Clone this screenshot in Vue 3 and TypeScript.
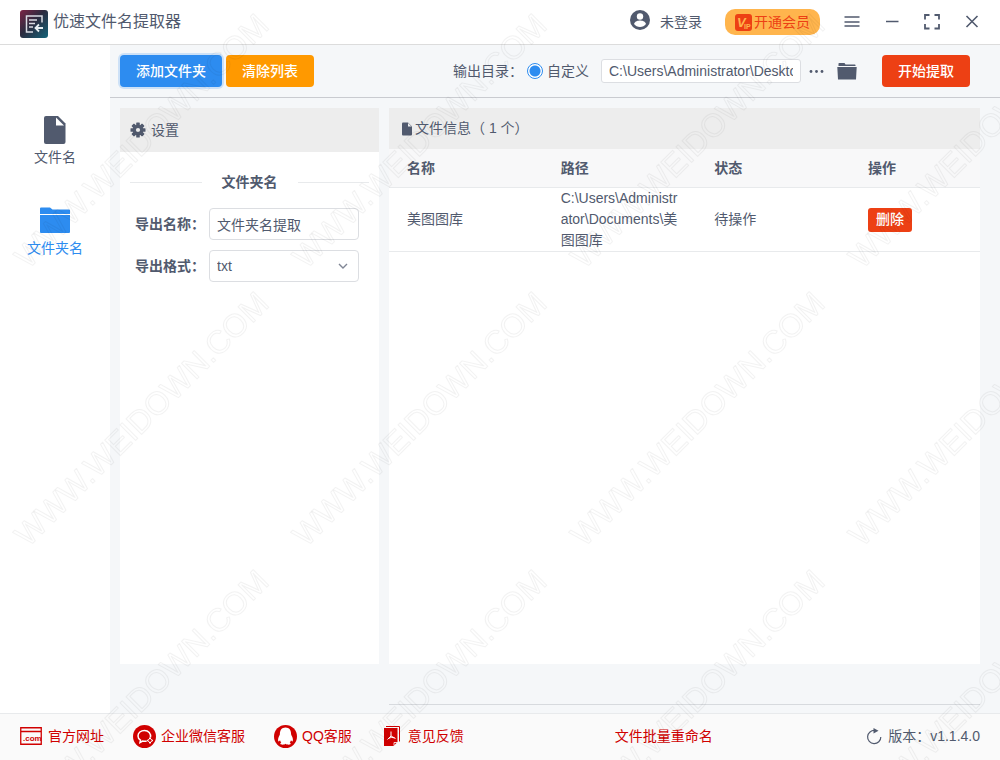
<script setup lang="ts">
import { ref } from 'vue'

interface FileRow {
  name: string
  path: string
  status: string
}

const outputMode = ref('custom')
const outputDir = ref('C:\\Users\\Administrator\\Desktop\\')
const exportName = ref('文件夹名提取')
const exportFormat = ref('txt')
const mode = ref('folder')
const rows = ref<FileRow[]>([
  { name: '美图图库', path: 'C:\\Users\\Administrator\\Documents\\美图图库', status: '待操作' },
])

function removeRow(index: number) {
  rows.value.splice(index, 1)
}
</script>

<template>
  <div class="app">
    <header class="titlebar">
      <svg class="logo" width="28" height="28" viewBox="0 0 28 28" aria-hidden="true">
        <defs>
          <linearGradient id="logo-bg" x1="0" y1="0" x2="1" y2="1">
            <stop offset="0" stop-color="#7d2445" />
            <stop offset="0.45" stop-color="#2c2b3f" />
            <stop offset="1" stop-color="#14647a" />
          </linearGradient>
        </defs>
        <rect width="28" height="28" rx="3" fill="url(#logo-bg)" />
        <path d="M22 12.500V6H6.500v16H13M9 10h8M9 13.500h6M9 17h4" fill="none" stroke="#d9dbe3" stroke-width="1.500" />
        <path d="M23 18h-7M19 14.500L15.500 18l3.500 3.500" fill="none" stroke="#e6eef2" stroke-width="1.800" />
      </svg>
      <h1 class="title">优速文件名提取器</h1>
      <button class="plain login" type="button">
        <svg width="20" height="20" viewBox="0 0 20 20" aria-hidden="true">
          <circle cx="10" cy="10" r="10" fill="#515a6e" />
          <circle cx="10" cy="6.500" r="3.200" fill="#fff" />
          <path d="M4 14c1-3 4-3.500 6-3.500s5 .5 6 3.500c-1.500 2-3.500 3-6 3s-4.500-1-6-3z" fill="#fff" />
        </svg>
        <span>未登录</span>
      </button>
      <button class="vip" type="button">
        <svg width="17" height="17" viewBox="0 0 17 17" aria-hidden="true">
          <rect width="17" height="17" rx="3" fill="#ed4014" />
          <text class="vip-v" x="2" y="13">V</text>
          <text class="vip-ip" x="9" y="15">IP</text>
        </svg>
        <span>开通会员</span>
      </button>
      <nav class="window-tools">
        <button class="plain" type="button" aria-label="菜单">
          <svg width="16" height="16" viewBox="0 0 16 16"><path d="M.5 3h15M.5 8h15M.5 12h15" stroke="#515a6e" stroke-width="1.500" /></svg>
        </button>
        <button class="plain" type="button" aria-label="最小化">
          <svg width="16" height="16" viewBox="0 0 16 16"><path d="M2 7.500h12.500" stroke="#515a6e" stroke-width="1.500" /></svg>
        </button>
        <button class="plain" type="button" aria-label="最大化">
          <svg width="16" height="16" viewBox="0 0 16 16"><path d="M1 5.500V1h4.500M10.500 1H15v4.500M15 10v4.500h-4.500M5.500 14.500H1V10" fill="none" stroke="#515a6e" stroke-width="1.800" /></svg>
        </button>
        <button class="plain" type="button" aria-label="关闭">
          <svg width="16" height="16" viewBox="0 0 16 16"><path d="M2.500 2l11 11M13.500 2l-11 11" stroke="#515a6e" stroke-width="1.600" /></svg>
        </button>
      </nav>
    </header>

    <div class="body">
      <aside class="sidebar">
        <button class="plain side-item" :class="{ active: mode === 'file' }" type="button" @click="mode = 'file'">
          <svg width="32" height="32" viewBox="0 0 32 32" aria-hidden="true">
            <path d="M7 2h12l7.500 7.500V28a2 2 0 0 1-2 2H7a2 2 0 0 1-2-2V4a2 2 0 0 1 2-2z" fill="currentColor" />
            <path d="M17 3.500v8h8z" fill="#fff" />
          </svg>
          <span>文件名</span>
        </button>
        <button class="plain side-item" :class="{ active: mode === 'folder' }" type="button" @click="mode = 'folder'">
          <svg width="32" height="32" viewBox="0 0 32 32" aria-hidden="true">
            <path d="M1 3.500a1 1 0 0 1 1-1H11l2.500 2H30a1 1 0 0 1 1 1V9H1zM1 10h30v17a1 1 0 0 1-1 1H2a1 1 0 0 1-1-1z" fill="currentColor" />
          </svg>
          <span>文件夹名</span>
        </button>
      </aside>

      <main class="main">
        <div class="toolbar">
          <button class="btn primary" type="button">添加文件夹</button>
          <button class="btn warning" type="button">清除列表</button>
          <div class="output">
            <label class="output-label" for="output-dir">输出目录：</label>
            <label class="radio"><input v-model="outputMode" type="radio" name="output" value="custom" />自定义</label>
            <input id="output-dir" v-model="outputDir" class="field dir" type="text" />
            <button class="plain more" type="button" aria-label="选择目录">
              <svg width="16" height="16" viewBox="0 0 16 16"><g fill="#515a6e"><circle cx="2" cy="8.500" r="1.400" /><circle cx="7.500" cy="8.500" r="1.400" /><circle cx="13" cy="8.500" r="1.400" /></g></svg>
            </button>
            <button class="plain open" type="button" aria-label="打开目录">
              <svg width="20" height="20" viewBox="0 0 20 20"><path d="M1.500 5V2.500l.5-.5h5.500l1 1.500H18l.5.5v1zM.3 6h19.400L19 18.500H1z" fill="#515a6e" /></svg>
            </button>
          </div>
          <button class="btn error" type="button">开始提取</button>
        </div>

        <div class="panels">
          <section class="panel">
            <h2 class="settings-head">
              <svg width="16" height="16" viewBox="0 0 16 16" aria-hidden="true">
                <g fill="#515a6e">
                  <rect x="6.200" y=".5" width="3.600" height="15" rx=".6" />
                  <rect x="6.200" y=".5" width="3.600" height="15" rx=".6" transform="rotate(45 8 8)" />
                  <rect x="6.200" y=".5" width="3.600" height="15" rx=".6" transform="rotate(90 8 8)" />
                  <rect x="6.200" y=".5" width="3.600" height="15" rx=".6" transform="rotate(135 8 8)" />
                  <circle cx="8" cy="8" r="5.300" />
                </g>
                <circle cx="8" cy="8" r="2.100" fill="#ededed" />
              </svg>
              设置
            </h2>
            <form class="settings" @submit.prevent>
              <div class="divider">文件夹名</div>
              <div class="form-row">
                <label for="export-name">导出名称：</label>
                <input id="export-name" v-model="exportName" class="field" type="text" />
              </div>
              <div class="form-row">
                <label for="export-format">导出格式：</label>
                <div class="select-wrap">
                  <select id="export-format" v-model="exportFormat" class="field">
                    <option value="txt">txt</option>
                    <option value="xlsx">xlsx</option>
                  </select>
                  <svg class="chevron" width="10" height="10" viewBox="0 0 10 10" aria-hidden="true"><path d="M1 3l4 4 4-4" fill="none" stroke="#808695" stroke-width="1.400" /></svg>
                </div>
              </div>
            </form>
          </section>

          <section class="panel">
            <h2 class="info-head">
              <svg width="12" height="14" viewBox="0 0 12 14" aria-hidden="true">
                <path d="M1 1.500Q1 .5 2 .5h5l4 4v8q0 1-1 1H2q-1 0-1-1z" fill="#515a6e" />
                <path d="M7 1v3.500h3.500z" fill="#ededed" />
              </svg>
              文件信息（ {{ rows.length }} 个）
            </h2>
            <table class="files">
              <thead>
                <tr><th>名称</th><th>路径</th><th>状态</th><th class="last">操作</th></tr>
              </thead>
              <tbody>
                <tr v-for="(row, i) in rows" :key="row.path">
                  <td>{{ row.name }}</td>
                  <td>{{ row.path }}</td>
                  <td>{{ row.status }}</td>
                  <td><button class="btn error small" type="button" @click="removeRow(i)">删除</button></td>
                </tr>
              </tbody>
            </table>
          </section>
        </div>
        <div class="bottom-rule"></div>
      </main>
    </div>

    <footer class="footer">
      <a class="link site" href="#">
        <svg width="22" height="18" viewBox="0 0 22 18" aria-hidden="true">
          <path d="M.75.75h20.500v16.500H.75zM.75 4.500h20.500" fill="none" stroke="#d00000" stroke-width="1.300" />
          <text class="dotcom" x="3" y="14">.com</text>
        </svg>
        官方网址
      </a>
      <a class="link wechat" href="#">
        <svg width="23" height="23" viewBox="0 0 23 23" aria-hidden="true">
          <circle cx="11.500" cy="11.500" r="11.500" fill="#d00000" />
          <path d="M17.500 12.500c.6-4-2-7-6-7-3.700 0-6.500 2.300-6.500 5.400 0 1.900 1 3.400 2.500 4.300L7 17.500l2.700-1.400c1.300.3 2.800.3 4 0" fill="none" stroke="#fff" stroke-width="1.500" />
          <path d="M17 12.500l1 2 2 1-2 1-1 2-1-2-2-1 2-1z" fill="#d00000" stroke="#fff" />
        </svg>
        企业微信客服
      </a>
      <a class="link qq" href="#">
        <svg width="23" height="23" viewBox="0 0 23 23" aria-hidden="true">
          <circle cx="11.500" cy="11.500" r="11.500" fill="#d00000" />
          <path d="M11.500 2.500C7.700 2.500 5.900 5.300 5.900 9c0 1-.6 1.700-1.100 2.800-.7 1.500-1 3.600-.4 4.500.4.500 1.100-.2 1.600-1 .2 1 .7 1.700 1.300 2.300-.8.400-1.200 1-.9 1.500.6.900 4 .7 5.100-.3 1.100 1 4.500 1.200 5.100.3.300-.5-.1-1.100-.9-1.500.6-.6 1.100-1.300 1.300-2.300.5.800 1.200 1.500 1.600 1 .6-.9.300-3-.4-4.500-.5-1.100-1.100-1.800-1.100-2.800 0-3.700-1.800-6.500-5.600-6.500z" fill="#fff" />
        </svg>
        QQ客服
      </a>
      <a class="link feedback" href="#">
        <svg width="16" height="20" viewBox="0 0 16 20" aria-hidden="true">
          <path d="M2 .5h13.500v15" fill="none" stroke="#d00000" />
          <path d="M0 2h13.500v14l-4 4H0z" fill="#d00000" />
          <path d="M10 19.500V16.500h3.500" fill="none" stroke="#fff" stroke-width=".8" />
          <path d="M7 5.500v4.500L3.500 13.500M7 10l4.500 2.500M4.500 12.500c2-1.200 4-1.300 6-.5" fill="none" stroke="#fff" />
        </svg>
        意见反馈
      </a>
      <a class="link rename" href="#">文件批量重命名</a>
      <div class="version">
        <svg width="16" height="18" viewBox="0 0 16 18" aria-hidden="true">
          <path d="M9 3.500A6.600 6.600 0 1 0 14.800 10" fill="none" stroke="#515a6e" stroke-width="1.200" />
          <path d="M7.500 1l5 2.800-5 2.700z" fill="#515a6e" />
        </svg>
        版本：v1.1.4.0
      </div>
    </footer>

    <svg class="watermark" width="100%" height="100%" aria-hidden="true">
      <defs>
        <pattern id="mark" width="278" height="278" patternUnits="userSpaceOnUse" y="-4">
          <text class="mark-text" transform="translate(28 274) rotate(-45)">WWW.WEIDOWN.COM</text>
        </pattern>
      </defs>
      <rect width="100%" height="100%" fill="url(#mark)" />
    </svg>
  </div>
</template>

<style>
body {
  margin: 0;
}
</style>

<style scoped>
.app {
  position: relative;
  display: flex;
  flex-direction: column;
  min-height: 100vh;
  overflow: hidden;
  background: #fff;
  color: #515a6e;
  font: 14px/21px "Liberation Sans", "Noto Sans CJK SC", sans-serif;
}
.app *, .app {
  box-sizing: border-box;
}
button, input, select {
  font: inherit;
  color: inherit;
}
button {
  cursor: pointer;
}
h1, h2 {
  margin: 0;
  font-weight: 400;
}
svg {
  display: block;
  flex: none;
}
.plain {
  padding: 0;
  border: 0;
  background: none;
}
.titlebar {
  display: flex;
  align-items: center;
  height: 45px;
  padding: 0 20px;
  border-bottom: 1px solid #dcdcdc;
}
.logo {
  margin-top: 4px;
}
.title {
  margin-left: 5px;
  font-size: 16px;
  line-height: 24px;
}
.login {
  display: flex;
  align-items: center;
  gap: 10px;
  margin-left: auto;
}
.login svg {
  margin-bottom: 4px;
}
.vip {
  display: flex;
  align-items: center;
  gap: 2px;
  height: 26px;
  margin: 0 16px 0 23px;
  padding: 0 10px;
  border: 0;
  border-radius: 10px;
  background: #ffb54d;
  color: #ed4014;
}
.vip-v {
  font: italic bold 13px "Liberation Sans", sans-serif;
  fill: #ffb54d;
}
.vip-ip {
  font: bold 7px "Liberation Sans", sans-serif;
  fill: #ffb54d;
}
.window-tools {
  display: flex;
}
.window-tools button {
  padding: 0 8px;
}
.window-tools button + button {
  margin-left: 8px;
}
.window-tools button:last-child {
  padding-right: 0;
}
.body {
  display: flex;
  flex: 1;
}
.sidebar {
  display: flex;
  flex: 0 0 110px;
  flex-direction: column;
  align-items: center;
  gap: 36px;
  padding-top: 69px;
}
.side-item {
  display: flex;
  flex-direction: column;
  align-items: center;
  gap: 1px;
  height: 55px;
}
.active {
  color: #2d8cf0;
}
.main {
  display: flex;
  flex: 1;
  flex-direction: column;
  min-width: 0;
  background: #f5f7f9;
}
.toolbar {
  display: flex;
  align-items: center;
  gap: 4px;
  height: 53px;
  padding: 0 30px 0 10px;
  border-bottom: 1px solid #c9cbd0;
}
.btn {
  height: 32px;
  padding: 0 16px;
  border: 0;
  border-radius: 4px;
  color: #fff;
  font-weight: 500;
}
.primary {
  background: #2d8cf0;
  box-shadow: 0 0 0 2px rgba(45, 140, 240, 0.2);
}
.warning {
  background: #f90;
}
.error {
  background: #ed4014;
}
.small {
  height: 24px;
  padding: 0 8px;
  border-radius: 3px;
}
.output {
  display: flex;
  align-items: center;
  margin: 0 21px 0 auto;
}
.output-label {
  margin-right: 4px;
}
.radio {
  display: flex;
  align-items: center;
  gap: 4px;
  margin-right: 12px;
}
.radio input {
  width: 16px;
  height: 16px;
  margin: 0;
  appearance: none;
  border: 1px solid #dcdee2;
  border-radius: 50%;
  background: #fff;
}
.radio input:checked {
  border-color: #2d8cf0;
  background: radial-gradient(circle, #2d8cf0 5px, #fff 6px);
}
.field {
  width: 150px;
  height: 32px;
  padding: 0 7px;
  border: 1px solid #dcdee2;
  border-radius: 4px;
  outline: 0;
  background: #fff;
}
.dir {
  width: 200px;
  height: 24px;
  border-radius: 3px;
}
.more {
  margin: 0 12px 0 8px;
}
.panels {
  display: grid;
  flex: 1;
  grid-template-columns: 259px 1fr;
  gap: 10px;
  padding: 10px 20px 0 10px;
}
.panel {
  background: #fff;
}
.settings-head, .info-head {
  display: flex;
  align-items: center;
  background: #ededed;
  font-size: 14px;
}
.settings-head {
  gap: 5px;
  height: 44px;
  padding: 0 10px;
}
.info-head {
  gap: 2px;
  height: 41px;
  padding: 0 12px;
}
.settings {
  display: flex;
  flex-direction: column;
  gap: 10px;
  padding: 20px 10px;
}
.divider {
  display: flex;
  align-items: center;
  gap: 20px;
  margin-bottom: 5px;
  font-weight: 700;
}
.divider::before, .divider::after {
  flex: 1;
  height: 1px;
  background: #e8eaec;
  content: "";
}
.form-row {
  display: flex;
  align-items: center;
  gap: 4px;
  padding-left: 5px;
}
.form-row label {
  font-weight: 700;
}
.select-wrap {
  position: relative;
}
select.field {
  display: block;
  appearance: none;
}
.chevron {
  position: absolute;
  top: 11px;
  right: 11px;
  pointer-events: none;
}
.files {
  width: 100%;
  border-collapse: separate;
  border-spacing: 0;
  table-layout: fixed;
}
.files th, .files td {
  width: 26%;
  padding: 0 18px;
  border-bottom: 1px solid #e8eaec;
  text-align: left;
  word-break: break-all;
}
.files th {
  height: 39px;
  background: #f8f8f9;
  font-weight: 700;
}
.files th.last {
  width: 22%;
}
.bottom-rule {
  height: 49px;
  margin: 0 20px 0 279px;
  background: linear-gradient(#d7dade, #d7dade) 0 40px / 100% 1px no-repeat;
}
.footer {
  display: flex;
  align-items: center;
  height: 47px;
  padding: 0 20px 2px;
  border-top: 1px solid #e8eaec;
  background: #fafafa;
}
.link {
  display: flex;
  align-items: center;
  gap: 5px;
  color: #d00000;
  text-decoration: none;
}
.site {
  gap: 6px;
}
.wechat, .qq {
  margin-left: 29px;
}
.feedback {
  gap: 8px;
  margin-left: 32px;
}
.rename {
  margin-left: 151px;
}
.version {
  display: flex;
  align-items: center;
  gap: 6px;
  margin-left: auto;
}
.dotcom {
  font: bold 8px "Liberation Sans", sans-serif;
  fill: #d00000;
}
.watermark {
  position: absolute;
  inset: 0;
  pointer-events: none;
}
.mark-text {
  font: 32px "Liberation Sans", sans-serif;
  fill: none;
  stroke: rgba(0, 0, 0, 0.05);
  stroke-width: 1;
  stroke-linejoin: round;
}
</style>
